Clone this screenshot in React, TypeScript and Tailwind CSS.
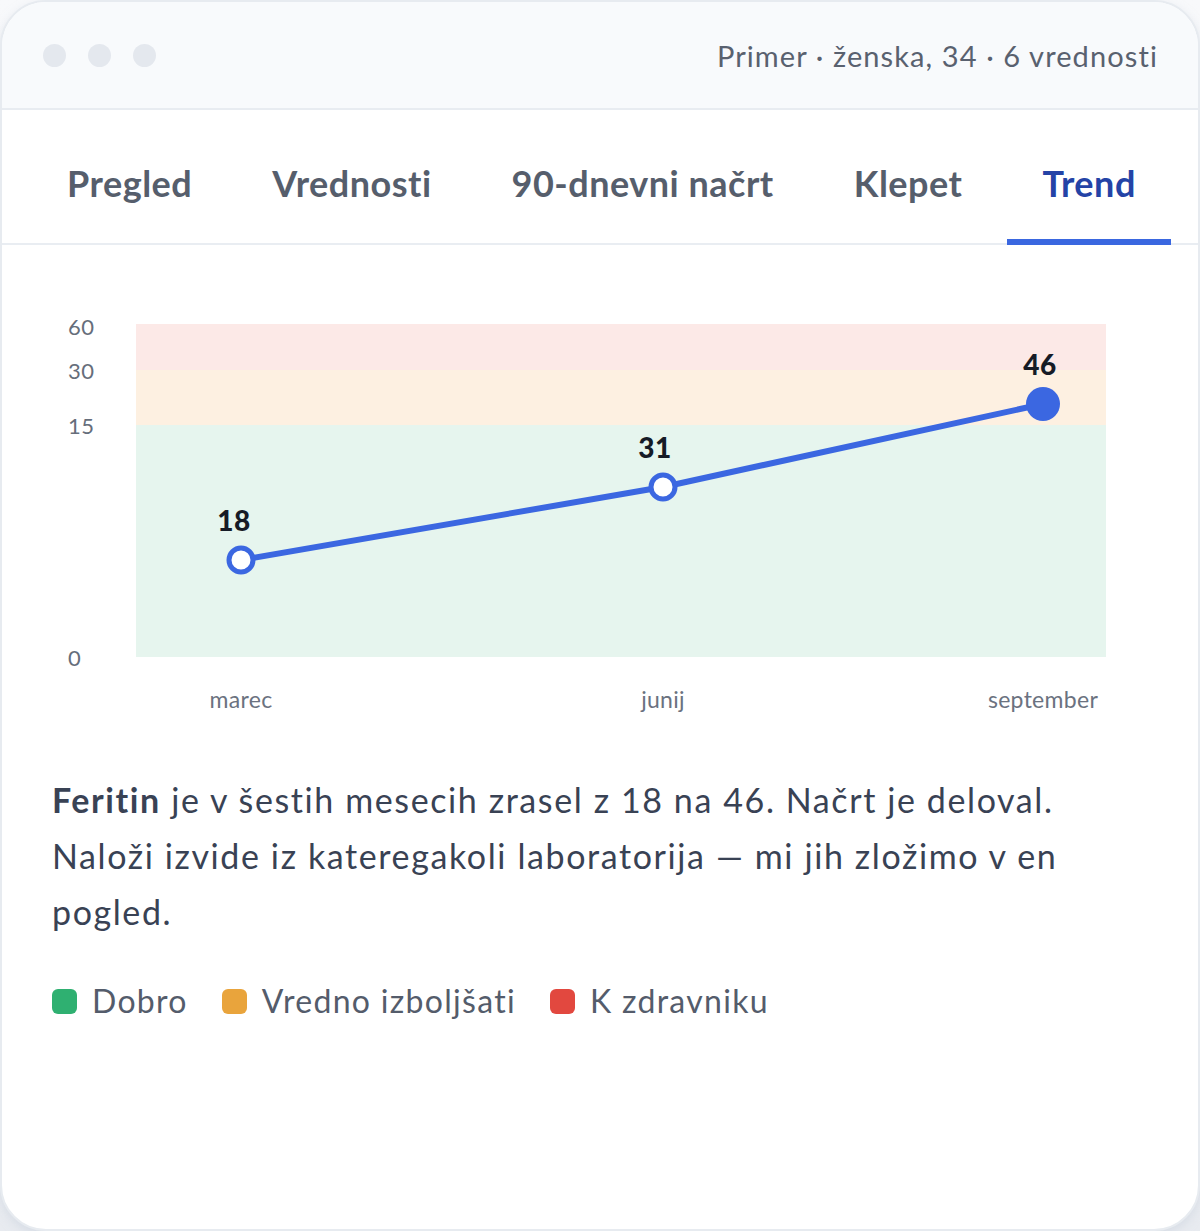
import React from 'react';

const tabs = ['Pregled', 'Vrednosti', '90-dnevni načrt', 'Klepet', 'Trend'];

const points = [
  { x: 241, y: 560, label: '18', month: 'marec', filled: false, dx: -7 },
  { x: 663, y: 487, label: '31', month: 'junij', filled: false, dx: -8 },
  { x: 1043, y: 404, label: '46', month: 'september', filled: true, dx: -3 },
];

const legend = [
  { color: 'bg-[#2fb071]', text: 'Dobro' },
  { color: 'bg-[#e9a43c]', text: 'Vredno izboljšati' },
  { color: 'bg-[#e2483f]', text: 'K zdravniku' },
];

function TrendChart() {
  // chart coordinates are page coordinates; svg top sits at y = 245
  const top = 245;
  return (
    <svg width="1196" height="495" viewBox={`2 ${top} 1196 495`} className="block">
      <rect x="136" y="324" width="970" height="47" fill="#fce9e7" />
      <rect x="136" y="370" width="970" height="56" fill="#fdf0e1" />
      <rect x="136" y="425" width="970" height="232" fill="#e6f5ee" />

      {[
        { v: '60', y: 327 },
        { v: '30', y: 371 },
        { v: '15', y: 426 },
        { v: '0', y: 658 },
      ].map((t) => (
        <text
          key={t.v}
          x="68"
          y={t.y + 8}
          fontSize="22"
          letterSpacing="0.5"
          fill="#666e7b"
          fontFamily="Lato, sans-serif"
        >
          {t.v}
        </text>
      ))}

      <polyline
        points={points.map((p) => `${p.x},${p.y}`).join(' ')}
        fill="none"
        stroke="#3b67e1"
        strokeWidth="6"
        strokeLinejoin="round"
      />

      {points.map((p) =>
        p.filled ? (
          <circle key={p.month} cx={p.x} cy={p.y} r="17" fill="#3b67e1" />
        ) : (
          <circle key={p.month} cx={p.x} cy={p.y} r="12" fill="#ffffff" stroke="#3b67e1" strokeWidth="5" />
        )
      )}

      {points.map((p) => (
        <text
          key={p.label}
          x={p.x + p.dx}
          y={p.y - 29}
          textAnchor="middle"
          fontSize="28"
          fontWeight="900"
          letterSpacing="0.5"
          fill="#161b26"
          fontFamily="Lato, sans-serif"
        >
          {p.label}
        </text>
      ))}

      {points.map((p) => (
        <text
          key={p.month + '-x'}
          x={p.x}
          y="708"
          textAnchor="middle"
          fontSize="23"
          letterSpacing="0.3"
          fill="#6b7280"
          fontFamily="Lato, sans-serif"
        >
          {p.month}
        </text>
      ))}
    </svg>
  );
}

export default function App() {
  return (
    <div className="w-[1200px] h-[1231px] bg-gradient-to-b from-[#f8f9fb] to-[#e8ebf0] font-['Lato',sans-serif]">
      <div className="h-full bg-white border-2 border-[#e7ebf0] rounded-[46px] overflow-hidden flex flex-col shadow-[0_4px_10px_rgba(200,208,220,0.5)]">
        {/* Window bar */}
        <div className="h-[108px] shrink-0 bg-[#f8fafc] border-b-2 border-[#e8ecf1] flex items-center justify-between pl-[41px] pr-[40px]">
          <div className="flex items-center gap-[22px]">
            <span className="w-[23px] h-[23px] rounded-full bg-[#e4e8ee]" />
            <span className="w-[23px] h-[23px] rounded-full bg-[#e4e8ee]" />
            <span className="w-[23px] h-[23px] rounded-full bg-[#e4e8ee]" />
          </div>
          <div className="text-[29px] text-[#59616f] tracking-[1.1px] pt-[2px]">
            Primer · ženska, 34 · 6 vrednosti
          </div>
        </div>

        {/* Tabs */}
        <div className="h-[135px] shrink-0 border-b-2 border-[#e9edf2] flex items-stretch pl-[30px] gap-[10px]">
          {tabs.map((t) => {
            const active = t === 'Trend';
            return (
              <div
                key={t}
                className={`px-[35px] flex items-center text-[36px] tracking-[0.5px] font-bold border-b-[6px] -mb-[2px] ${
                  active ? 'text-[#2443a6] border-[#3a67e0]' : 'text-[#565e6c] border-transparent'
                }`}
              >
                <span className="pt-[16px]">{t}</span>
              </div>
            );
          })}
        </div>

        <TrendChart />

        {/* Summary */}
        <div className="px-[50px] pt-[32px]">
          <p className="text-[34px] leading-[56px] tracking-[1.6px] text-[#394254] max-w-[1100px]">
            <span className="font-bold">Feritin</span> je v šestih mesecih zrasel z 18 na 46. Načrt je
            deloval. Naloži izvide iz kateregakoli laboratorija — mi jih zložimo v en pogled.
          </p>

          <div className="mt-[37px] flex items-center gap-[34px] text-[32px] tracking-[1.3px] text-[#545c6b]">
            {legend.map((l) => (
              <div key={l.text} className="flex items-center gap-[15px]">
                <span className={`w-[25px] h-[25px] rounded-[6px] ${l.color}`} />
                <span>{l.text}</span>
              </div>
            ))}
          </div>
        </div>
      </div>
    </div>
  );
}
